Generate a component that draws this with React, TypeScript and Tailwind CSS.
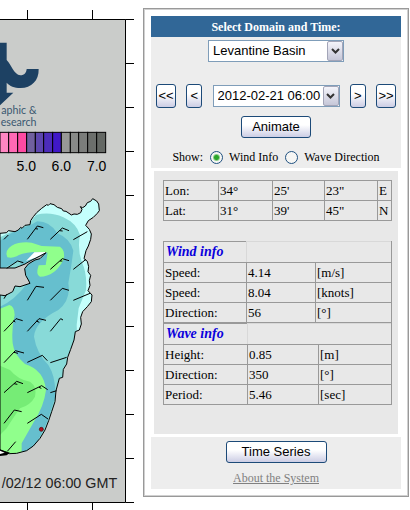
import type { ReactNode } from "react";

const SEA =
  "M0 700 L20 698 25 692 45 695 55 690 62 682 66 685 75 676 90 674 92 662 100 650 110 638 125 625 140 614 145 616 150 611 162 614 172 622 185 626 190 633 198 634 210 642 214 645 222 642 232 643 242 638 246 628 241 620 248 623 256 618 262 608 272 604 278 596 290 603 296 612 298 632 292 640 280 652 265 662 257 676 268 688 274 702 272 718 265 738 258 752 252 776 262 784 266 800 264 815 272 826 268 842 270 856 264 872 276 885 274 905 262 920 248 935 242 952 244 972 238 990 226 995 222 1020 212 1048 203 1072 200 1092 190 1108 188 1132 178 1135 168 1172 165 1205 155 1235 146 1262 135 1290 120 1315 100 1338 80 1352 50 1360 28 1361 0 1350 L0 885 15 887 38 875 45 858 60 860 90 850 85 840 77 826 74 806 85 792 105 780 120 776 138 758 120 768 90 783 75 792 45 804 0 804 Z";

const barbs = [
  "M82 718 L112 678 130 683 M106 686 L114 687",
  "M151 718 L187 684 207 692 M179 692 L188 693",
  "M220 719 L262 695",
  "M12 718 L25 705",
  "M20 805 L53 783 70 788",
  "M151 808 L187 776 207 782 M180 783 L187 783",
  "M220 808 L258 778",
  "M12 896 L20 883",
  "M82 901 L108 859 132 862",
  "M151 901 L187 865 207 871",
  "M220 901 L270 880",
  "M12 994 L48 956 68 962 M40 962 L46 966",
  "M82 994 L117 956 138 961 M109 963 L118 967",
  "M151 994 L182 956 189 960",
  "M12 1088 L46 1052 72 1059 M42 1057 L54 1060",
  "M82 1087 L127 1066 142 1082",
  "M151 1088 L200 1072",
  "M12 1178 L50 1144 69 1151 M42 1151 L52 1153",
  "M82 1178 L125 1157 143 1169 M117 1162 L124 1165",
  "M151 1178 L170 1172",
  "M12 1270 L43 1230 65 1235",
  "M82 1270 L124 1243 144 1257",
  "M22 1354 L47 1325",
];

const scale = [
  { x: 0, w: 26, fill: "#ff86c2" },
  { x: 26, w: 27, fill: "#ff69b4" },
  { x: 53, w: 27, fill: "#ff4aa2" },
  { x: 80, w: 26, fill: "#70609e" },
  { x: 106, w: 25, fill: "#5d46ae" },
  { x: 131, w: 27, fill: "#4c2cba" },
  { x: 158, w: 26, fill: "#4018c8" },
  { x: 184, w: 27, fill: "#979896" },
  { x: 211, w: 25, fill: "#888a88" },
  { x: 236, w: 27, fill: "#7b7d7b" },
  { x: 263, w: 27, fill: "#6c6f6c" },
  { x: 290, w: 27, fill: "#646864" },
];

const rightTicks = [58, 190, 322, 454, 586, 718, 847, 979, 1111, 1243, 1375, 1507];

const WaveMap = () => (
  <svg viewBox="0 0 426 1530" className="h-[510px] w-[142px] shrink-0" role="img" aria-label="Wave height map">
    <defs>
      <clipPath id="sea">
        <path d={SEA} />
      </clipPath>
    </defs>
    <rect x="-10" y="58" width="387" height="1449" fill="#cacccA" />

    {/* logo */}
    <path
      d="M0 128 H20 V180 C34 194 42 224 61 226 C74 226 79 218 80 207 H116 C117 242 94 264 62 264 C42 264 30 258 20 248 V278 H40 L0 316 Z"
      fill="#1d4163"
    />
    <g fill="#3a5870" fontFamily="Lato, 'Noto Sans', sans-serif" fontSize="32">
      <text x="4" y="341">aphic &amp;</text>
      <text x="2" y="377">esearch</text>
    </g>

    {/* wave height scale */}
    <g stroke="#000" strokeWidth="3">
      {scale.map((s) => (
        <rect key={s.x} x={s.x} y="397" width={s.w} height="61" fill={s.fill} />
      ))}
    </g>
    <g fontFamily="'Liberation Sans Narrow', 'Liberation Sans', sans-serif" fontSize="42" textAnchor="middle">
      <text x="79" y="512">5.0</text>
      <text x="184" y="512">6.0</text>
      <text x="290" y="512">7.0</text>
    </g>

    {/* sea */}
    <g clipPath="url(#sea)">
      <rect y="580" width="310" height="800" fill="#c4fffc" />
      <path
        d="M0 712 L90 668 L108 645 Q150 634 190 652 Q230 670 240 705 Q232 745 245 785 Q262 820 258 870 L236 925 L230 975 L235 1100 L150 1300 L90 1370 H0 Z"
        fill="#88dad8"
      />
      <path
        d="M0 722 Q40 690 92 675 L112 664 Q150 664 172 700 Q210 715 220 752 Q214 800 205 850 Q213 900 175 930 Q105 965 102 1010 Q110 1060 145 1095 Q168 1130 166 1190 L140 1270 L90 1370 H0 V910 L70 860 L60 780 L0 810 Z"
        fill="#66bfce"
      />
      <path d="M0 890 L45 860 L80 852 Q45 900 0 920 Z" fill="#88dad8" />
      <path
        d="M22 772 Q12 752 35 737 Q60 724 95 728 L125 738 L180 740 Q198 752 190 780 Q165 830 120 830 Q106 826 116 796 L137 795 L143 758 L100 756 Q60 760 50 769 Q36 776 22 772 Z"
        fill="#90ff8c"
      />
      <path d="M78 783 L103 757 L140 756 L110 772 Z" fill="#fff" />
      <path
        d="M0 926 L28 915 Q43 918 44 945 Q34 985 38 1030 Q42 1065 75 1092 Q132 1110 138 1170 Q132 1220 100 1268 L65 1330 V1370 H0 Z"
        fill="#90ff8c"
      />
      <path
        d="M0 1097 L30 1110 Q55 1140 90 1145 Q112 1160 105 1190 Q92 1215 60 1225 Q42 1250 20 1285 L0 1305 Z"
        fill="#76ec76"
      />
    </g>
    <path d={SEA} fill="none" stroke="#000" strokeWidth="3" />
    <path d="M0 1348 L14 1353 30 1358 20 1366 0 1368 Z" />
    <path d="M0 1352 L14 1358 0 1362 Z" fill="#fff" />
    <g fill="none" stroke="#000" strokeWidth="3">
      {barbs.map((d) => (
        <path key={d} d={d} />
      ))}
    </g>
    <circle cx="124" cy="1288" r="6" fill="#b01020" stroke="#500" strokeWidth="2" />
    <text x="5" y="1463" fontFamily="'Liberation Sans', sans-serif" fontSize="43" fill="#222">
      /02/12 06:00 GMT
    </text>

    {/* frame and ticks */}
    <g stroke="#000" strokeWidth="3">
      <path d="M0 58.5 H377 M376.5 58 V1507 M0 1507.5 H377 M82.5 30 V58 M277.5 30 V58 M82.5 1507 V1530 M277.5 1507 V1530" fill="none" />
      {rightTicks.map((y) => (
        <line key={y} x1="377" x2="402" y1={y + 0.5} y2={y + 0.5} />
      ))}
    </g>
  </svg>
);

const Button = ({ className, label, children }: { className: string; label?: string; children: ReactNode }) => (
  <button
    type="button"
    aria-label={label}
    className={`flex items-center justify-center whitespace-nowrap rounded-[3px] border border-[#1c4a78] bg-linear-to-b from-white from-40% to-[#cccde4] font-['Liberation_Sans',sans-serif] text-[13px] leading-4 text-black ${className}`}
  >
    {children}
  </button>
);

const Select = ({ className, label, value }: { className: string; label: string; value: string }) => (
  <div className={`relative ${className}`}>
    <select
      aria-label={label}
      className="block h-full w-full appearance-none border border-[#7f9db9] bg-white pl-1 font-['Liberation_Sans',sans-serif] text-[13px] leading-4 text-black"
    >
      <option>{value}</option>
    </select>
    <span className="pointer-events-none absolute inset-y-px right-px flex w-4 items-center justify-center rounded-xs border border-[#a3a5b8] bg-linear-to-b from-[#f4f4fa] to-[#c6c7d8]">
      <svg viewBox="0 0 9 6" className="h-[6px] w-[9px]">
        <path d="M1 1 L4.5 4.5 L8 1" fill="none" stroke="#333" strokeWidth="2" />
      </svg>
    </span>
  </div>
);

const Radio = ({ label, checked }: { label: string; checked?: boolean }) => (
  <label className="flex items-center gap-[6px]">
    <input
      type="radio"
      name="show"
      defaultChecked={checked}
      className="size-[13px] appearance-none rounded-full border border-[#1f5080] bg-[#f6f6f4] checked:bg-[radial-gradient(circle,#2ba52b_0_2px,#8ccf8c_3px,#f6f6f4_4px)]"
    />
    {label}
  </label>
);

const cell = "h-5 border-t border-l border-[#999] p-0 pl-px";

const InfoTable = ({ title, rows, cols }: { title: string; rows: string[][]; cols: ReactNode }) => (
  <table className="w-full table-fixed border-separate border-spacing-0 border-r border-b border-[#999]">
    {cols}
    <thead>
      <tr>
        <th className="h-[21px] border-t border-l border-[#999] p-0 pl-[2px] text-left text-sm leading-4 font-bold text-[#0a00dc] italic">
          {title}
        </th>
        <td colSpan={2} className="border-t border-l border-[#d8d8d8]" />
      </tr>
    </thead>
    <tbody>
      {rows.map((row, i) => (
        <tr key={i}>
          {row.map((text) => (
            <td key={text} className={cell}>
              {text}
            </td>
          ))}
        </tr>
      ))}
    </tbody>
  </table>
);

const position = [
  ["Lon:", "34°", "25'", "23\"", "E"],
  ["Lat:", "31°", "39'", "45\"", "N"],
];

const wind = [
  ["Speed:", "4.14", "[m/s]"],
  ["Speed:", "8.04", "[knots]"],
  ["Direction:", "56", "[°]"],
];

const wave = [
  ["Height:", "0.85", "[m]"],
  ["Direction:", "350", "[°]"],
  ["Period:", "5.46", "[sec]"],
];

const App = () => {
  return (
    <div className="flex items-start overflow-hidden bg-white font-['Liberation_Serif',serif] text-black">
      <WaveMap />
      <main className="mt-2 mr-px ml-px flex-1 border border-[#999] p-[7px] inset-shadow-[0_0_0_1px_#d0d0d0]">
        <section className="bg-[#ededed] pb-[3px]">
          <h1 className="h-[21px] bg-[#316797] text-center text-xs leading-[22px] font-bold text-white">
            Select Domain and Time:
          </h1>
          <Select className="mx-auto mt-[3px] h-[22px] w-[136px]" label="Domain" value="Levantine Basin" />
          <div className="mt-[22px] flex items-center justify-between px-[5px]">
            <Button className="h-6 w-5" label="First">&lt;&lt;</Button>
            <Button className="h-6 w-4" label="Previous">&lt;</Button>
            <Select className="h-[22px] w-[127px]" label="Time" value="2012-02-21 06:00" />
            <Button className="h-6 w-4" label="Next">&gt;</Button>
            <Button className="h-6 w-5" label="Last">&gt;&gt;</Button>
          </div>
          <Button className="mx-auto mt-2 h-[22px] w-[70px]">Animate</Button>
          <div className="mt-[11px] flex items-center justify-center gap-[7px] text-xs leading-4">
            <span>Show:</span>
            <Radio label="Wind Info" checked />
            <Radio label="Wave Direction" />
          </div>
        </section>

        <section className="mx-[3px] my-[3px] bg-[#e8e8e8] pt-[9px] pr-[6px] pb-[29px] pl-[9px] text-[13px] leading-4">
          <table className="w-full table-fixed border-separate border-spacing-0 border-r border-b border-[#999]">
            <colgroup>
              <col className="w-[55px]" />
              <col className="w-[54px]" />
              <col className="w-[52px]" />
              <col />
              <col className="w-[14px]" />
            </colgroup>
            <tbody>
              {position.map((row) => (
                <tr key={row[0]}>
                  {row.map((text) => (
                    <td key={text} className={cell}>
                      {text}
                    </td>
                  ))}
                </tr>
              ))}
            </tbody>
          </table>
          <div className="mt-5">
            <InfoTable
              title="Wind info"
              rows={wind}
              cols={
                <colgroup>
                  <col className="w-[83px]" />
                  <col className="w-[69px]" />
                  <col />
                </colgroup>
              }
            />
            <InfoTable
              title="Wave info"
              rows={wave}
              cols={
                <colgroup>
                  <col className="w-[84px]" />
                  <col className="w-[71px]" />
                  <col />
                </colgroup>
              }
            />
          </div>
        </section>

        <section className="flex flex-col items-center bg-[#ededed] pt-1 pb-[3px]">
          <Button className="h-[22px] w-[101px]">Time Series</Button>
          <a href="#about" className="mt-[7px] text-xs leading-4 text-[#808080] underline">
            About the System
          </a>
        </section>
      </main>
    </div>
  );
};

export default App;
